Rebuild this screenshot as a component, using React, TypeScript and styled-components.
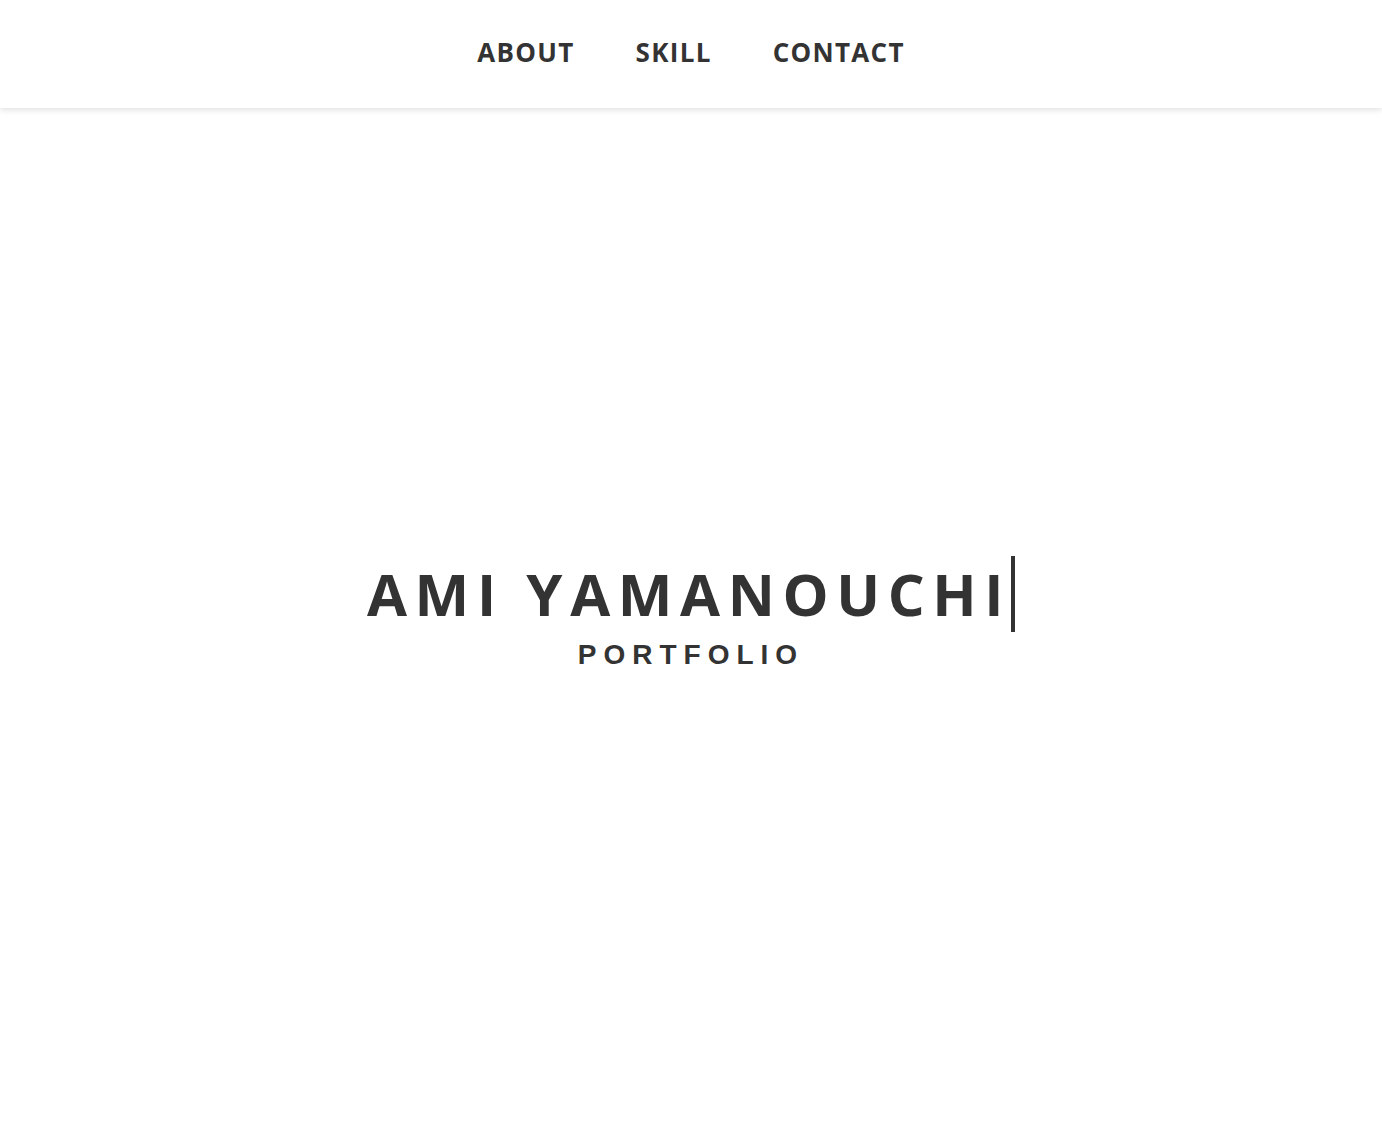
import styled, { createGlobalStyle } from "styled-components"

const GlobalStyle = createGlobalStyle`
    html, body {
        margin: 0;
        padding: 0;
        background: #ffffff;
    }
`

const Page = styled.div`
    display: flex;
    flex-direction: column;
    height: 1138px;
    color: #333333;
`

const Header = styled.header`
    height: 108px;
    display: flex;
    justify-content: center;
    align-items: center;
    gap: 61px;
    box-shadow: 0 2px 6px rgba(0, 0, 0, 0.12);
    position: relative;
    z-index: 1;
`

const NavLink = styled.a`
    font-family: "Open Sans", sans-serif;
    font-weight: 700;
    font-size: 26px;
    letter-spacing: 1.3px;
    color: #333333;
    text-decoration: none;
    margin-top: -4px;
`

const Hero = styled.main`
    flex: 1;
    display: flex;
    flex-direction: column;
    align-items: center;
    justify-content: center;
    padding-bottom: 20px;
`

const Title = styled.h1`
    margin: 0;
    font-family: "Open Sans", sans-serif;
    font-weight: 700;
    font-size: 58px;
    line-height: 76px;
    letter-spacing: 7.6px;
    border-right: 4px solid #333333;
`

const Subtitle = styled.p`
    margin: 7px 0 0;
    font-family: "Liberation Sans", Arial, sans-serif;
    font-weight: 700;
    font-size: 28px;
    letter-spacing: 7px;
`

export default function App() {
    return (
        <Page>
            <GlobalStyle />
            <Header>
                <NavLink href="#about">ABOUT</NavLink>
                <NavLink href="#skill">SKILL</NavLink>
                <NavLink href="#contact">CONTACT</NavLink>
            </Header>
            <Hero>
                <Title>AMI YAMANOUCHI</Title>
                <Subtitle>PORTFOLIO</Subtitle>
            </Hero>
        </Page>
    )
}
